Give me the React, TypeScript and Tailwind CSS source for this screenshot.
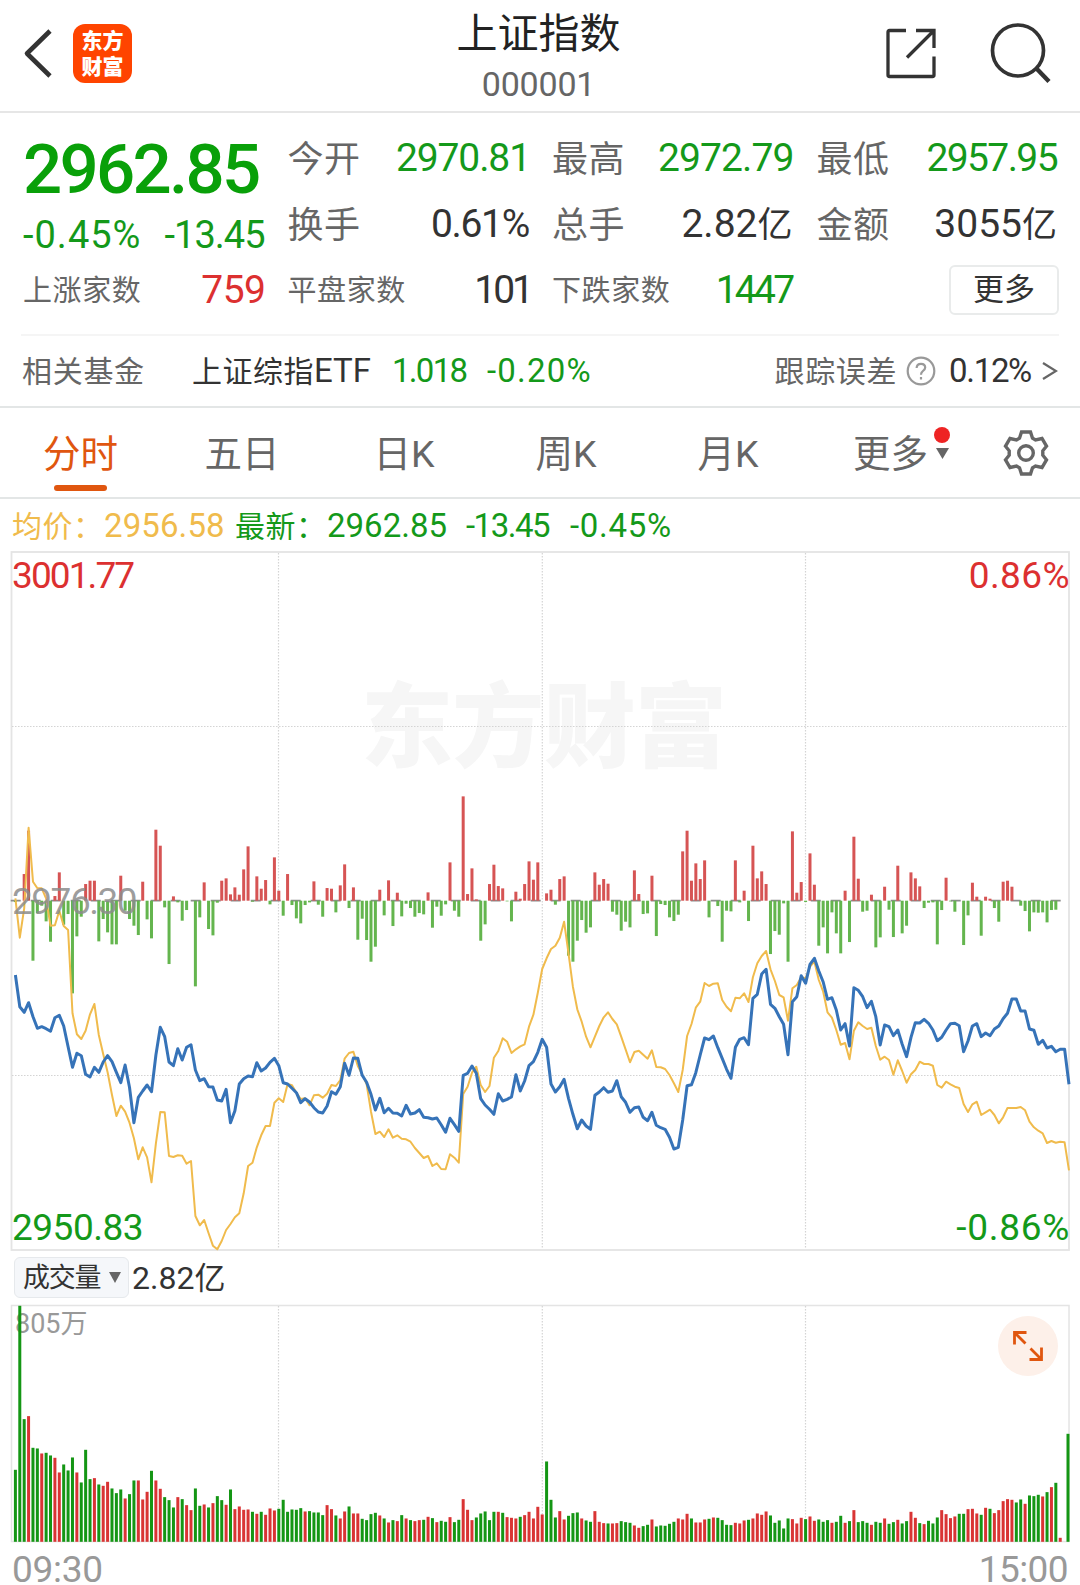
import type { ReactNode } from 'react';

// ----------------------------------------------------------------------------
// Minute series (241 samples, 09:30–15:00). Values are in chart units, where
// UNITS of them make one pixel.
// ----------------------------------------------------------------------------
const UNITS = 3;
const STEP = 4.39;
const FIRST_X = 15.4;

// index line, measured down from the top of the plotting band
const INDEX_LINE = [
  585, 680, 697, 668, 710, 745, 740, 746, 754, 713, 706, 738, 800, 862, 820, 827, 883, 891, 862, 877,
  846, 827, 845, 877, 908, 855, 922, 1028, 952, 933, 915, 935, 825, 742, 770, 846, 857, 806, 840, 802,
  794, 870, 902, 896, 920, 921, 960, 963, 928, 1028, 992, 912, 896, 888, 890, 848, 873, 864, 847, 835,
  857, 908, 912, 925, 938, 968, 956, 966, 983, 996, 999, 978, 935, 943, 920, 850, 886, 834, 835, 886,
  907, 943, 990, 955, 998, 985, 999, 1000, 1008, 976, 1002, 999, 989, 1012, 1013, 1017, 1014, 1034, 1057, 1015,
  1034, 1054, 886, 880, 858, 880, 956, 975, 988, 1003, 941, 963, 958, 951, 884, 933, 903, 857, 845, 817,
  778, 802, 912, 936, 920, 898, 955, 1003, 1046, 1020, 1038, 1048, 946, 936, 923, 937, 933, 902, 950, 967,
  997, 983, 981, 1012, 1022, 997, 1036, 1043, 1048, 1072, 1107, 1102, 1020, 917, 914, 878, 825, 774, 779, 768,
  803, 835, 868, 895, 802, 778, 773, 794, 655, 643, 582, 568, 673, 685, 710, 733, 824, 665, 650, 587,
  610, 553, 535, 573, 606, 658, 653, 690, 750, 731, 798, 623, 631, 650, 683, 664, 710, 795, 735, 740,
  767, 750, 793, 830, 772, 728, 729, 718, 730, 750, 782, 772, 750, 731, 730, 737, 815, 783, 738, 731,
  770, 759, 767, 747, 738, 716, 700, 657, 657, 693, 693, 747, 751, 793, 781, 804, 799, 815, 808, 808,
  913,
];

const AVERAGE_LINE = [
  355, 473, 385, 143, 305, 325, 325, 355, 437, 436, 392, 438, 450, 700, 763, 777, 752, 703, 672, 765,
  822, 877, 945, 1008, 977, 995, 1028, 1075, 1138, 1102, 1132, 1207, 1090, 996, 997, 1128, 1131, 1126, 1127, 1151,
  1143, 1308, 1336, 1320, 1360, 1397, 1408, 1383, 1350, 1332, 1312, 1300, 1240, 1158, 1148, 1102, 1066, 1038, 1038, 968,
  955, 966, 912, 916, 938, 957, 955, 976, 946, 944, 953, 941, 915, 918, 900, 836, 819, 815, 858, 883,
  912, 995, 1062, 1055, 1071, 1048, 1073, 1066, 1076, 1078, 1085, 1104, 1119, 1134, 1128, 1158, 1150, 1167, 1168, 1123,
  1133, 1148, 942, 920, 878, 860, 915, 936, 918, 833, 813, 775, 785, 819, 808, 799, 793, 740, 704, 638,
  567, 535, 507, 497, 473, 425, 520, 620, 688, 725, 770, 802, 770, 738, 712, 697, 717, 733, 770, 808,
  847, 816, 812, 824, 836, 811, 861, 862, 867, 885, 910, 936, 870, 768, 732, 683, 665, 609, 618, 611,
  610, 660, 680, 694, 653, 655, 640, 666, 592, 550, 528, 513, 568, 603, 645, 652, 722, 625, 615, 592,
  595, 560, 545, 600, 635, 697, 713, 750, 794, 789, 838, 752, 727, 738, 747, 743, 798, 839, 830, 840,
  884, 841, 873, 908, 883, 870, 845, 852, 852, 857, 915, 923, 905, 913, 920, 924, 972, 996, 973, 965,
  1005, 997, 989, 1005, 1030, 1012, 984, 984, 984, 981, 991, 1025, 1042, 1052, 1060, 1089, 1083, 1088, 1085, 1087,
  1171,
];

// momentum bars around the previous close, positive = red / up
const MOMENTUM = [
  -4, 0, 80, 210, -180, -38, -15, -62, -123, 14, 85, -72, -40, -278, -107, -48, 50, 60, 60, -122,
  -55, -95, -131, -131, 75, -30, -55, -75, -103, 57, -56, -113, 213, 165, -20, -190, 13, -5, -60, -28,
  0, -257, -50, 55, -85, -104, -6, 60, 67, 19, 40, 18, 94, 163, -3, 73, 36, 62, -11, 130,
  30, -45, 80, -13, -53, -68, -13, -5, 58, -12, -48, 38, 36, -35, 46, 109, -22, 40, -117, -54,
  -118, -183, -138, 33, -44, 61, -76, 24, -47, -9, -22, -48, -37, -41, 25, -81, -18, -45, -11, 115,
  -30, -48, 313, 20, 97, 4, -120, -71, 50, 108, 44, 37, -2, -62, 27, 6, 50, 118, 63, 115,
  0, 22, 33, -12, 65, 73, -165, -183, -120, -58, -96, -80, 85, 48, 65, 51, -33, -42, -90, -63,
  -80, 91, 20, -40, -38, 75, -106, -10, -13, -50, -61, -42, 148, 210, 60, 112, 65, 121, -50, 0,
  -16, -123, -30, -32, 121, -5, 30, -61, 165, 67, 88, 50, -160, -91, -102, -8, -183, 208, 24, 56,
  -4, 142, 48, -135, -80, -158, -35, -98, -158, 30, -124, 192, 66, -33, -30, 18, -140, -110, 42, -27,
  -109, 105, -98, -75, 85, 67, 43, -22, -6, -5, -131, -28, 69, -2, -33, 0, -133, -44, 54, 12,
  -105, 12, 6, -22, -63, 57, 60, 42, 0, -15, -31, -92, -35, -36, -35, -65, -28, -27,
];

// traded volume, the sign carries the direction of that minute
const VOLUME = [
  -216, -708, -368, 377, -282, -280, 265, -267, -259, 252, 208, -232, -214, -253, 208, -178, -276, -188, 191, -172,
  168, 180, -160, -146, -157, 130, -143, -184, 184, 127, 150, -213, 184, 159, -134, -125, -103, 134, -128, 110,
  95, -160, -108, 112, -103, 116, -137, -125, 111, -157, 98, 106, 96, 97, -90, 84, -90, 81, 100, 94,
  -99, -126, -90, -97, -96, -101, 91, -92, -88, -88, -80, 110, 98, -79, 70, 91, -106, 85, 85, -69,
  -65, -83, -87, 79, -70, 58, -65, 62, -80, 70, -65, 62, 65, -66, 75, -71, 59, -63, -60, 74,
  -59, -66, 128, 96, 65, -73, -85, -91, -65, -90, 90, -87, 74, 72, 70, -75, 80, 90, 70, 105,
  82, -241, -126, -73, 92, 67, -78, -86, -88, 70, -64, -60, 92, 60, 56, -55, 55, 56, -62, -59,
  -57, 49, 42, -47, -51, 67, -46, -49, -48, -54, -60, 70, 67, 84, -70, 58, 58, 67, -69, 73,
  -72, -65, -51, -50, 57, 55, 64, -66, 70, 85, 81, 91, -79, -57, -64, -40, -70, 68, 55, 72,
  -68, 76, 63, -67, -60, -65, 57, -60, -78, 57, -62, 95, -59, -62, -57, 51, -60, -57, 70, -54,
  -59, 66, -55, -62, 90, 72, -56, 53, -63, -55, -73, 95, 83, 71, 76, -84, -84, 98, 99, 85,
  -81, 102, -99, 86, 95, 122, 128, 126, -118, -127, 114, -139, -137, -141, 136, -149, 164, -177, 12, 0,
  -324,
];

const GRID_X = [278.5, 542.3, 805.5];

const xAt = (i: number) => FIRST_X + i * STEP;

const toPoints = (series: number[]) =>
  series.map((v, i) => `${xAt(i).toFixed(1)},${(v / UNITS).toFixed(1)}`).join(' ');

// ----------------------------------------------------------------------------
// Header
// ----------------------------------------------------------------------------

function Header() {
  return (
    <header className="flex h-[113px] items-center justify-between border-b-2 border-[#e6e6e6] pl-[22px] pr-[28px]">
      <div className="flex w-[260px] items-center gap-[19px] pb-[5px]">
        <svg width="32" height="56" viewBox="0 0 32 56" fill="none" stroke="#333" strokeWidth="4.6">
          <path d="M28 6 L5 28.500 L28 51" strokeLinejoin="round" />
        </svg>
        <div className="flex h-[59px] w-[59px] flex-col items-center justify-center rounded-[12px] bg-[#ff4400] pt-[2px] text-[21px] font-black leading-[26px] text-white">
          <span>东方</span>
          <span>财富</span>
        </div>
      </div>
      <div className="flex flex-col items-center pl-[3px] pt-[3px]">
        <h1 className="text-[41px] leading-[53px] text-[#222]">上证指数</h1>
        <p className="h-[46px] text-[34px] leading-[46px] tracking-[-0.2px] text-[#666]">000001</p>
      </div>
      <div className="flex w-[260px] items-center justify-end gap-[53px] pb-[5px]">
        <svg width="52" height="52" viewBox="0 0 52 52" fill="none" stroke="#333" strokeWidth="3.300">
          <path d="M21 3.500 H4.500 Q3 3.500 3 5 V48 Q3 49.500 4.500 49.500 H47.500 Q49 49.500 49 48 V29.500" />
          <path d="M31 3.500 H49 V21 M48.500 4 L22 30.500" />
        </svg>
        <svg width="62" height="62" viewBox="0 0 62 62" fill="none" stroke="#333" strokeWidth="3.700">
          <circle cx="28" cy="28.500" r="25.500" />
          <path d="M46 46 L59 59.500" strokeWidth="4.400" />
        </svg>
      </div>
    </header>
  );
}

// ----------------------------------------------------------------------------
// Quote block
// ----------------------------------------------------------------------------

function Stat({ label, small, children }: { label: string; small?: boolean; children: ReactNode }) {
  return (
    <div className="flex h-[66px] items-center justify-between">
      <span
        className={
          small
            ? 'pt-[2px] text-[29px] tracking-[0.6px] text-[#666]'
            : 'pt-[3px] text-[36px] tracking-[0.6px] text-[#666]'
        }
      >
        {label}
      </span>
      {children}
    </div>
  );
}

function Quote() {
  return (
    <section className="grid h-[221px] grid-cols-4 gap-x-6 px-[23px] pt-[12px] text-[39px] leading-none">
      <div>
        <div className="flex h-[88px] items-center text-[69px] font-medium tracking-[-2.700px] text-[#09a009]">
          2962.85
        </div>
        <div className="flex h-[44px] items-center justify-between text-[38px] text-[#14991a]">
          <span className="tracking-[1px]">-0.45%</span>
          <span className="mr-[-1px] tracking-[-1px]">-13.45</span>
        </div>
        <Stat label="上涨家数" small>
          <span className="mr-[-2px] tracking-[-0.5px] text-[#dc3030]">759</span>
        </Stat>
      </div>
      <div>
        <Stat label="今开">
          <span className="mr-[-2px] tracking-[-1.1px] text-[#14991a]">2970.81</span>
        </Stat>
        <Stat label="换手">
          <span className="mr-[-1px] tracking-[-1.3px] text-[#333]">0.61%</span>
        </Stat>
        <Stat label="平盘家数" small>
          <span className="mr-[-3px] tracking-[-3px] text-[#333]">101</span>
        </Stat>
      </div>
      <div>
        <Stat label="最高">
          <span className="mr-[-1px] tracking-[-0.9px] text-[#14991a]">2972.79</span>
        </Stat>
        <Stat label="总手">
          <span className="text-[#333]">
            2.82<span className="text-[35px]">亿</span>
          </span>
        </Stat>
        <Stat label="下跌家数" small>
          <span className="tracking-[-2.700px] text-[#14991a]">1447</span>
        </Stat>
      </div>
      <div>
        <Stat label="最低">
          <span className="tracking-[-1.600px] text-[#14991a]">2957.95</span>
        </Stat>
        <Stat label="金额">
          <span className="text-[#333]">
            3055<span className="text-[35px]">亿</span>
          </span>
        </Stat>
        <div className="mr-[-2px] flex h-[65px] items-center justify-end">
          <button className="h-[50px] w-[110px] rounded-[6px] border-2 border-[#e9ebeb] text-[31px] leading-none text-[#333]">
            更多
          </button>
        </div>
      </div>
    </section>
  );
}

function FundRow() {
  return (
    <section className="h-[74px] border-b-2 border-[#e3e6e6]">
      <div className="mx-[21px] flex h-full items-center border-t-2 border-[#f5f5f5] pb-[1px] text-[33px] leading-none text-[#14991a]">
        <span className="w-[171px] pl-[1px] pt-[2px] text-[30px] tracking-[0.7px] text-[#666]">相关基金</span>
        <span className="w-[200px] text-[#333]">
          <span className="text-[30px] tracking-[0.5px]">上证综指</span>ETF
        </span>
        <span className="w-[95px] tracking-[-1.700px]">1.018</span>
        <span className="tracking-[1.2px]">-0.20%</span>
        <span className="ml-auto pt-[2px] text-[30px] tracking-[0.6px] text-[#666]">跟踪误差</span>
        <svg className="ml-[9px]" width="30" height="30" viewBox="0 0 30 30" fill="none" stroke="#999" strokeWidth="2.200">
          <circle cx="15" cy="15" r="13.300" />
          <path d="M10.600 12 Q10.800 7.800 15 7.800 Q19.200 7.800 19.200 11.600 Q19.200 13.600 16.800 15.100 Q15 16.300 15 18.800" />
          <path d="M15 21 V23.500" />
        </svg>
        <span className="ml-[13px] tracking-[-1.300px] text-[#333]">0.12%</span>
        <svg className="ml-[11px] mr-[1px]" width="16" height="20" viewBox="0 0 16 20" fill="none" stroke="#666" strokeWidth="2.300">
          <path d="M1 2 L14 10 L1 18" />
        </svg>
      </div>
    </section>
  );
}

// ----------------------------------------------------------------------------
// Period tabs
// ----------------------------------------------------------------------------

const TABS = ['分时', '五日', '日K', '周K', '月K'];

function Tabs() {
  return (
    <nav className="flex h-[91px] items-stretch border-b-2 border-[#e3e6e6] text-[37.500px] leading-none text-[#666]">
      {TABS.map((tab, i) => (
        <div
          key={tab}
          className={
            i === 0
              ? 'flex w-[161px] flex-col items-center pt-[28px] text-[#e0560f]'
              : 'flex w-[162px] flex-col items-center pt-[28px]'
          }
        >
          <span>{tab}</span>
          {i === 0 && <span className="mt-[11px] h-[6px] w-[53px] rounded-full bg-[#e0560f]" />}
        </div>
      ))}
      <div className="flex w-[163px] pl-[44px] pt-[28px]">
        <span>更多</span>
        <span className="ml-[6px] mt-[-9px] flex flex-col items-center">
          <span className="h-4 w-4 rounded-full bg-[#ee2424]" />
          <svg className="mt-[5px]" width="13" height="11" viewBox="0 0 13 11">
            <path d="M0 0 H13 L6.500 11 Z" fill="#666" />
          </svg>
        </span>
      </div>
      <div className="flex flex-1 items-center justify-center">
        <svg width="48" height="48" viewBox="-24 -24 48 48" fill="none" stroke="#666" strokeWidth="3.400">
          <path d="M-4.500 -21 H4.500 L6.500 -14.800 L9.500 -13 L16 -14.500 L20.500 -6.800 L16.800 -2.200 V2.200 L20.500 6.800 L16 14.500 L9.500 13 L6.500 14.800 L4.500 21 H-4.500 L-6.500 14.800 L-9.500 13 L-16 14.500 L-20.500 6.800 L-16.800 2.200 V-2.200 L-20.500 -6.800 L-16 -14.500 L-9.500 -13 L-6.500 -14.800 Z" />
          <circle r="7.300" />
        </svg>
      </div>
    </nav>
  );
}

// ----------------------------------------------------------------------------
// Charts
// ----------------------------------------------------------------------------

function Legend() {
  return (
    <div className="flex h-[46px] items-center pl-[12px] pt-[7px] text-[33px] leading-none text-[#14991a]">
      <span className="w-[92px] whitespace-nowrap pt-[2px] text-[30px] tracking-[0.5px] text-[#f0bb4c]">
        均价：
      </span>
      <span className="w-[131px] tracking-[0.1px] text-[#f0bb4c]">2956.58</span>
      <span className="w-[92px] whitespace-nowrap pt-[2px] text-[30px] tracking-[0.5px]">最新：</span>
      <span className="w-[139px]">2962.85</span>
      <span className="w-[104px] tracking-[-1.500px]">-13.45</span>
      <span className="tracking-[0.7px]">-0.45%</span>
    </div>
  );
}

function PriceChart() {
  return (
    <div className="relative h-[709px] text-[37px] leading-none">
      <svg className="block" width="1080" height="709" viewBox="0 0 1080 709" fill="none">
        <text
          x="361"
          y="215"
          fontSize="92"
          fontWeight="900"
          textLength="366"
          fill="#f6f6f6"
          className="font-['Noto_Sans_CJK_SC',sans-serif]"
        >
          东方财富
        </text>
        <rect x="11.500" y="7" width="1057.500" height="698" stroke="#e4e4e4" strokeWidth="1.800" />
        <g stroke="#d4d4d4" strokeWidth="1.200" strokeDasharray="1.500 1.500">
          {GRID_X.map((x) => (
            <path key={x} d={`M${x} 8 V704`} />
          ))}
          <path d="M12 181.500 H1068 M12 530.500 H1068" />
        </g>
        <path d="M10.700 355.700 H1061" stroke="#8c8c8c" strokeWidth="1.800" strokeDasharray="10 10" />
        {MOMENTUM.map((v, i) => (
          <rect
            key={i}
            x={xAt(i) - 1.5}
            y={v > 0 ? 355.7 - v / UNITS : 355.7}
            width="3"
            height={Math.abs(v) / UNITS}
            fill={v > 0 ? '#d65454' : '#64b54e'}
          />
        ))}
        <g transform="translate(0 235)" strokeLinejoin="round">
          <polyline points={toPoints(AVERAGE_LINE)} stroke="#f0bb4c" strokeWidth="2" />
          <polyline points={toPoints(INDEX_LINE)} stroke="#3673b8" strokeWidth="3" />
        </g>
      </svg>
      <span className="absolute left-[12px] top-[12px] tracking-[-1.900px] text-[#dc3030]">3001.77</span>
      <span className="absolute right-[10px] top-[12px] tracking-[0.4px] text-[#dc3030]">0.86%</span>
      <span className="absolute left-[12px] top-[338px] tracking-[-1.500px] text-[#8c8c8c]/85">2976.30</span>
      <span className="absolute bottom-[8px] left-[12px] tracking-[-0.5px] text-[#14991a]">2950.83</span>
      <span className="absolute bottom-[8px] right-[10px] tracking-[0.7px] text-[#14991a]">-0.86%</span>
    </div>
  );
}

function VolumeBar() {
  return (
    <div className="flex h-[46px] items-center pl-[14px] text-[32px] leading-none text-[#333]">
      <button className="flex h-[41px] w-[115px] items-center rounded-[6px] border border-[#e6e9ec] bg-[#f5f7fa] pl-[8px]">
        <span className="pt-[3px] text-[27px] tracking-[-1.2px]">成交量</span>
        <svg className="ml-[9px]" width="12" height="11" viewBox="0 0 12 11">
          <path d="M0 0 H12 L6 11 Z" fill="#666" />
        </svg>
      </button>
      <span className="ml-[3px] pt-[1px]">
        2.82<span className="text-[31px]">亿</span>
      </span>
    </div>
  );
}

function VolumeChart() {
  return (
    <div className="relative h-[245px]">
      <span className="absolute left-[15px] top-[11px] text-[27px] leading-none text-[#999]">805万</span>
      <svg className="relative block" width="1080" height="245" viewBox="0 0 1080 245" fill="none">
        <rect x="11.500" y="5.500" width="1057.500" height="236" stroke="#e4e4e4" strokeWidth="1.500" />
        <g stroke="#d4d4d4" strokeWidth="1.200" strokeDasharray="1.500 1.500">
          {GRID_X.map((x) => (
            <path key={x} d={`M${x} 6 V241`} />
          ))}
        </g>
        {VOLUME.map((v, i) => (
          <rect
            key={i}
            x={Math.min(xAt(i), 1068) - 1.5}
            y={241.8 - Math.abs(v) / UNITS}
            width="3"
            height={Math.abs(v) / UNITS}
            fill={v > 0 ? '#d93434' : '#149614'}
          />
        ))}
      </svg>
      <button className="absolute right-[22px] top-[16px] h-[60px] w-[60px] rounded-full bg-[#fdf0e9]">
        <svg width="60" height="60" viewBox="0 0 60 60" fill="none" stroke="#e0560f" strokeWidth="2.800">
          <path d="M28.500 16.500 H16.500 V28.500 M16.500 16.500 L27.500 27.500" />
          <path d="M31.500 43.500 H43.500 V31.500 M43.500 43.500 L32.500 32.500" />
        </svg>
      </button>
    </div>
  );
}

export default function App() {
  return (
    <div className="flex h-[1585px] w-[1080px] flex-col bg-white font-['Roboto','Noto_Sans_CJK_SC',sans-serif]">
      <Header />
      <Quote />
      <FundRow />
      <Tabs />
      <Legend />
      <PriceChart />
      <VolumeBar />
      <VolumeChart />
      <div className="flex h-10 items-end justify-between px-[12px] text-[37px] leading-[30px] text-[#999]">
        <span className="tracking-[-0.3px]">09:30</span>
        <span className="tracking-[-0.6px]">15:00</span>
      </div>
    </div>
  );
}
